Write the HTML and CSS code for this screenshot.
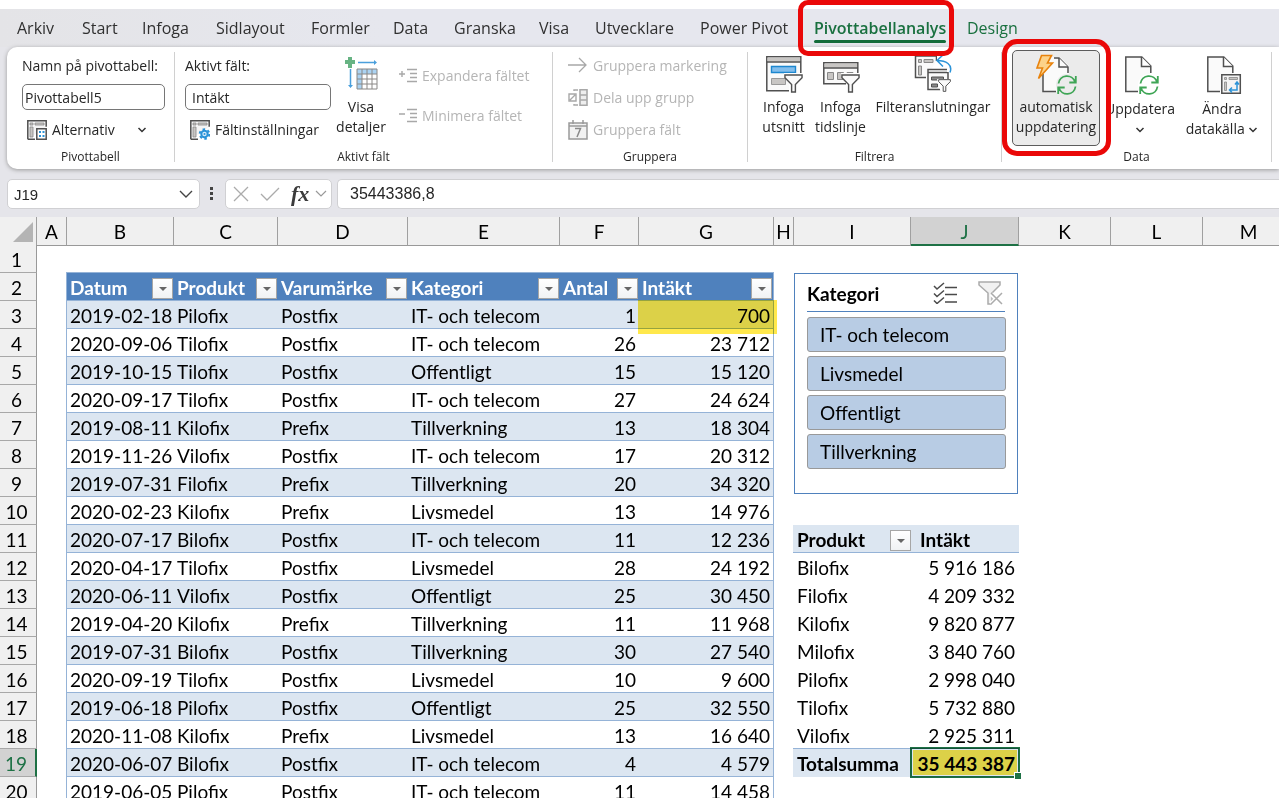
FILE: index.html
```html
<!DOCTYPE html>
<html lang="sv">
<head>
<meta charset="utf-8">
<meta name="viewport" content="width=device-width, initial-scale=1">
<title>Pivottabell</title>
<link rel="stylesheet" href="styles.css">
</head>
<body>
<svg class="defs" aria-hidden="true">
  <symbol id="chev" viewBox="0 0 10 8"><path d="M1.500 2l3.500 3.500L8.500 2" fill="none" stroke="currentColor" stroke-width="1.500"/></symbol>
  <symbol id="refresh" viewBox="0 0 20 20"><path d="M1.500 8.500A8.500 8.500 0 0 1 18 7M18.500 11.500A8.500 8.500 0 0 1 2 13M18.800 1v6.500h-6.500M1.200 19v-6.500h6.500" fill="none" stroke="#3fa556" stroke-width="1.800"/></symbol>
  <symbol id="funnel" viewBox="0 0 20 20"><path d="M1 1h18v3l-7 7v8H8v-8L1 4z" fill="#fafafa" stroke="#505050" stroke-width="1.500"/></symbol>
</svg>

<nav class="tabs">
  <a href="#">Arkiv</a><a href="#">Start</a><a href="#">Infoga</a><a href="#">Sidlayout</a><a href="#">Formler</a><a href="#">Data</a><a href="#">Granska</a><a href="#">Visa</a><a href="#">Utvecklare</a><a href="#">Power Pivot</a><a href="#" class="active">Pivottabellanalys</a><a href="#" class="context">Design</a>
</nav>

<div class="ribbon-area">
<div class="ribbon">
  <section class="group g-name">
    <div class="items stack">
      <label for="pname">Namn på pivottabell:</label>
      <input id="pname" type="text" value="Pivottabell5">
      <button class="small"><svg width="20" height="20" viewBox="0 0 20 20"><path d="M.8 19.200V.8h18.400v6M.8 19.200H8" fill="#f4f4f4" stroke="#505050" stroke-width="1.500"/><path d="M3 3h3v2H3zM8 3h9v2H8zM3 7h3v10H3z" fill="#c8c6c4" stroke="#888" stroke-width=".8"/><path d="M9.800 8.800h9.400v10.400H9.800z" fill="#fff" stroke="#505050" stroke-width="1.500"/><path d="M12 11h2v2h-2zM15.500 11h2v2h-2zM12 15h2v2h-2zM15.500 15h2v2h-2z" fill="#2b93d8"/></svg>Alternativ<svg class="chev push" width="10" height="8"><use href="#chev"/></svg></button>
    </div>
    <h2>Pivottabell</h2>
  </section>
  <section class="group g-field">
    <div class="items">
      <div class="stack">
        <label for="fname">Aktivt fält:</label>
        <input id="fname" class="inset" type="text" value="Intäkt">
        <button class="small"><svg width="20" height="20" viewBox="0 0 20 20"><path d="M.8 19.200V.8h18.400v6M.8 19.200H8" fill="#f4f4f4" stroke="#505050" stroke-width="1.500"/><path d="M3 3h3v2H3zM8 3h9v2H8zM3 7h3v10H3z" fill="#c8c6c4" stroke="#888" stroke-width=".8"/><circle cx="14.500" cy="14" r="3.200" fill="#d5ebfa" stroke="#2b93d8" stroke-width="2"/><circle cx="14.500" cy="14" r="4.800" fill="none" stroke="#2b93d8" stroke-width="2" stroke-dasharray="2.500 2.530"/><circle cx="14.500" cy="14" r="1" fill="#2b93d8"/></svg>Fältinställningar</button>
      </div>
      <button class="large"><svg width="36" height="38" viewBox="0 0 36 38"><path d="M5 2h4v3h3v4H9v4H5V9H2V5h3z" fill="#67b383"/><path d="M15 7.500h17M7.500 14v16" stroke="#4a9fdc" stroke-width="1.500"/><path d="M31 5l3 2.500L31 10zM5 30l2.500 3L10 30z" fill="#4a9fdc"/><path d="M14 14h20v20H14z" fill="#fff"/><path d="M14 14h20v5H19v15h-5z" fill="#abd3f2"/><path d="M14 14h20v20H14zM14 19h20M14 24h20M14 29h20M19 14v20M24 14v20M29 14v20" fill="none" stroke="#8a8886" stroke-width="1"/></svg><span>Visa<br>detaljer</span></button>
      <div class="pair">
        <button class="small" disabled><svg width="20" height="16" viewBox="0 0 20 16"><path d="M1 6h6M4 3v6M9 1.500h10M12 5.500h7M12 9.500h7M9 13.500h10" stroke="#a8a8a8" stroke-width="1.400"/></svg>Expandera fältet</button>
        <button class="small" disabled><svg width="20" height="16" viewBox="0 0 20 16"><path d="M1 6h6M9 1.500h10M12 5.500h7M12 9.500h7M9 13.500h10" stroke="#a8a8a8" stroke-width="1.400"/></svg>Minimera fältet</button>
      </div>
    </div>
    <h2>Aktivt fält</h2>
  </section>
  <section class="group g-group">
    <div class="items stack">
      <button class="small" disabled><svg width="20" height="20" viewBox="0 0 20 20"><path d="M0 9h18M11 2l7 7-7 7" fill="none" stroke="#a8a8a8" stroke-width="1.300"/></svg>Gruppera markering</button>
      <button class="small" disabled><svg width="20" height="20" viewBox="0 0 20 20"><path d="M1 6h7v7H1zM2 12l5-5M6 3V2h4M6 16v1h4" fill="none" stroke="#a8a8a8" stroke-width="1.400"/><path d="M12 1.700h7v15.600h-7zM12 7h7M12 12h7" fill="#eee" stroke="#a8a8a8" stroke-width="1.600"/></svg>Dela upp grupp</button>
      <button class="small" disabled><svg width="20" height="20" viewBox="0 0 20 20"><path d="M1 3h18v16H1zM1 6h18M5 0v4M15 0v4" fill="#f2f2f2" stroke="#9a9a9a" stroke-width="1.500"/><path d="M7 8.500h5.500L9 17" fill="none" stroke="#8a8a8a" stroke-width="1.500"/></svg>Gruppera fält</button>
    </div>
    <h2>Gruppera</h2>
  </section>
  <section class="group g-filter">
    <div class="items">
      <button class="large"><svg width="38" height="38" viewBox="0 0 38 38"><path d="M1.800 1.800h34v34h-34z" fill="#fafafa" stroke="#505050" stroke-width="1.500"/><path d="M2.500 2.500h32.600v4H2.500z" fill="#c8c6c4"/><path d="M2 7h34" stroke="#505050" stroke-width="1.300"/><path d="M6.500 11.500h24v6h-24z" fill="#83beec" stroke="#1c87cf" stroke-width="1.400"/><path d="M6.500 23.500h14v6h-14z" fill="#c8c6c4" stroke="#999"/><path d="M19 18h19v20H24V25l-5-4z" fill="#fff"/><use href="#funnel" x="19" y="19" width="19" height="19"/></svg><span>Infoga<br>utsnitt</span></button>
      <button class="large"><svg width="38" height="38" viewBox="0 0 38 38"><path d="M1.800 7.800h34v21h-34z" fill="#fafafa" stroke="#505050" stroke-width="1.500"/><path d="M2.500 8.500h32.600v4H2.500z" fill="#c8c6c4"/><path d="M2 13h34" stroke="#505050" stroke-width="1.300"/><path d="M5.500 17.500h6v7h-6zM15.500 17.500h6v7h-6zM25 17.500h6v4h-6z" fill="#c8c6c4" stroke="#888"/><path d="M19 18h19v20H24V25l-5-4z" fill="#fff"/><use href="#funnel" x="19" y="19" width="19" height="19"/></svg><span>Infoga<br>tidslinje</span></button>
      <button class="large"><svg width="38" height="38" viewBox="0 0 38 38"><path d="M12 22.500H1.500V1h21v5" fill="#fafafa" stroke="#505050" stroke-width="1.500"/><path d="M4.500 4.500h3v3h-3zM10 4.500h9v3h-9zM4.500 11h3v9h-3z" fill="#c8c6c4" stroke="#888"/><path d="M14 14.500h20v20H14z" fill="#fafafa" stroke="#505050" stroke-width="1.500"/><path d="M14 17.500h20" stroke="#505050" stroke-width="1.500"/><path d="M17.500 22h12v3h-12zM17.500 29h6v3h-6z" fill="#888" stroke="#505050"/><path d="M23 24h14v14H27z" fill="#fff"/><path d="M23 12V0h14v17h-4v-4z" fill="#fff"/><use href="#funnel" x="24" y="24" width="13" height="13"/><path d="M36 17.500c3-8-4-12-13-12M29 0l-6 5.500 6 6" fill="none" stroke="#2b93d8" stroke-width="1.500"/></svg><span>Filteranslutningar</span></button>
    </div>
    <h2>Filtrera</h2>
  </section>
  <section class="group g-data">
    <div class="items">
      <button class="large pressed" aria-pressed="true"><svg width="42" height="42" viewBox="0 0 42 42"><path d="M8 3h17l9 9v26H8z" fill="#fafafa"/><path d="M8 20v17.500h13M19 4h5l9 9v6" fill="none" stroke="#505050" stroke-width="1.500"/><path d="M24 4v9h9" fill="#fafafa" stroke="#505050" stroke-width="1.500"/><path d="M6.500 1.500h10l-4 7.500h5L3.500 24.500l4-10.500H2z" fill="#fcd28a" stroke="#e8820c" stroke-width="1.600"/><circle cx="32" cy="31" r="11" fill="#ebebeb"/><use href="#refresh" x="22" y="21" width="20" height="20"/></svg><span>automatisk<br>uppdatering</span></button>
      <button class="large low"><svg width="40" height="40" viewBox="-4 0 40 40"><path d="M14 36.500H1.800V2h16l9 9v7" fill="#fafafa" stroke="#505050" stroke-width="1.500"/><path d="M17.500 2v9.500H27" fill="#fff" stroke="#505050" stroke-width="1.500"/><circle cx="25" cy="30" r="11" fill="#fff"/><use href="#refresh" x="15" y="20" width="20" height="20"/></svg><span>Uppdatera<br><svg class="chev" width="10" height="8"><use href="#chev"/></svg></span></button>
      <button class="large low"><svg width="40" height="40" viewBox="-4 0 40 40"><path d="M14 36.500H1.800V2h16l9 9v7" fill="#fafafa" stroke="#505050" stroke-width="1.500"/><path d="M17.500 2v9.500H27" fill="#fff" stroke="#505050" stroke-width="1.500"/><path d="M15.800 19.800h18.500v18.500H15.800z" fill="#f4f4f4" stroke="#505050" stroke-width="1.500"/><path d="M18.500 22.500h2v2h-2zM23 22.500h8.500v2H23zM18.500 27h2v8.500h-2z" fill="#c8c6c4" stroke="#888" stroke-width=".8"/><path d="M31 28v7h-7M29 29.500l2-2.500 2 2.500M26 32.500L23.500 35l2.500 2.500" fill="none" stroke="#2b93d8" stroke-width="1.500"/></svg><span>Ändra<br>datakälla <svg class="chev" width="10" height="8"><use href="#chev"/></svg></span></button>
    </div>
    <h2>Data</h2>
  </section>
</div>
</div>

<div class="formula-bar">
  <div class="box name-box"><input type="text" aria-label="Namnruta" value="J19"><svg width="14" height="10" viewBox="0 0 14 10"><path d="M1 2l6 6 6-6" fill="none" stroke="#444" stroke-width="1.400"/></svg></div>
  <svg class="dots" width="4" height="14"><path d="M0 0h3v3H0zM0 5h3v3H0zM0 10h3v3H0z" fill="#444"/></svg>
  <div class="box fx-box">
    <button aria-label="Avbryt"><svg width="16" height="16" viewBox="0 0 16 16"><path d="M1 1l14 14M15 1L1 15" stroke="#ababab" stroke-width="1.300"/></svg></button>
    <button aria-label="Ange"><svg width="20" height="16" viewBox="0 0 20 16"><path d="M1 8l6 6L19 2" fill="none" stroke="#ababab" stroke-width="1.300"/></svg></button>
    <button class="fx" aria-label="Infoga funktion">fx</button>
    <svg width="12" height="8" viewBox="0 0 12 8"><path d="M1 1l5 5 5-5" fill="none" stroke="#999" stroke-width="1.200"/></svg>
  </div>
  <input class="box formula" type="text" aria-label="Formelfält" value="35443386,8">
</div>

<main class="sheet">
  <div class="col-heads">
    <span class="corner"><svg width="20" height="20"><path d="M20 0v20H0z" fill="#b4b4b4"/></svg></span>
    <span>A</span><span>B</span><span>C</span><span>D</span><span>E</span><span>F</span><span>G</span><span>H</span><span>I</span><span class="sel">J</span><span>K</span><span>L</span><span>M</span>
  </div>
  <div class="cells">
    <div class="row-heads">
      <span>1</span><span>2</span><span>3</span><span>4</span><span>5</span><span>6</span><span>7</span><span>8</span><span>9</span><span>10</span><span>11</span><span>12</span><span>13</span><span>14</span><span>15</span><span>16</span><span>17</span><span>18</span><span class="sel">19</span><span>20</span>
    </div>
    <table class="data">
      <colgroup><col class="c-b"><col class="c-c"><col class="c-d"><col class="c-e"><col class="c-f"><col class="c-g"></colgroup>
      <thead>
        <tr>
          <th><div>Datum<button class="drop" aria-label="Filtrera Datum"></button></div></th>
          <th><div>Produkt<button class="drop" aria-label="Filtrera Produkt"></button></div></th>
          <th><div>Varumärke<button class="drop" aria-label="Filtrera Varumärke"></button></div></th>
          <th><div>Kategori<button class="drop" aria-label="Filtrera Kategori"></button></div></th>
          <th><div>Antal<button class="drop" aria-label="Filtrera Antal"></button></div></th>
          <th><div>Intäkt<button class="drop" aria-label="Filtrera Intäkt"></button></div></th>
        </tr>
      </thead>
      <tbody>
        <tr><td>2019-02-18</td><td>Pilofix</td><td>Postfix</td><td>IT- och telecom</td><td>1</td><td class="marked">700</td></tr>
        <tr><td>2020-09-06</td><td>Tilofix</td><td>Postfix</td><td>IT- och telecom</td><td>26</td><td>23 712</td></tr>
        <tr><td>2019-10-15</td><td>Tilofix</td><td>Postfix</td><td>Offentligt</td><td>15</td><td>15 120</td></tr>
        <tr><td>2020-09-17</td><td>Tilofix</td><td>Postfix</td><td>IT- och telecom</td><td>27</td><td>24 624</td></tr>
        <tr><td>2019-08-11</td><td>Kilofix</td><td>Prefix</td><td>Tillverkning</td><td>13</td><td>18 304</td></tr>
        <tr><td>2019-11-26</td><td>Vilofix</td><td>Postfix</td><td>IT- och telecom</td><td>17</td><td>20 312</td></tr>
        <tr><td>2019-07-31</td><td>Filofix</td><td>Prefix</td><td>Tillverkning</td><td>20</td><td>34 320</td></tr>
        <tr><td>2020-02-23</td><td>Kilofix</td><td>Prefix</td><td>Livsmedel</td><td>13</td><td>14 976</td></tr>
        <tr><td>2020-07-17</td><td>Bilofix</td><td>Postfix</td><td>IT- och telecom</td><td>11</td><td>12 236</td></tr>
        <tr><td>2020-04-17</td><td>Tilofix</td><td>Postfix</td><td>Livsmedel</td><td>28</td><td>24 192</td></tr>
        <tr><td>2020-06-11</td><td>Vilofix</td><td>Postfix</td><td>Offentligt</td><td>25</td><td>30 450</td></tr>
        <tr><td>2019-04-20</td><td>Kilofix</td><td>Prefix</td><td>Tillverkning</td><td>11</td><td>11 968</td></tr>
        <tr><td>2019-07-31</td><td>Bilofix</td><td>Postfix</td><td>Tillverkning</td><td>30</td><td>27 540</td></tr>
        <tr><td>2020-09-19</td><td>Tilofix</td><td>Postfix</td><td>Livsmedel</td><td>10</td><td>9 600</td></tr>
        <tr><td>2019-06-18</td><td>Pilofix</td><td>Postfix</td><td>Offentligt</td><td>25</td><td>32 550</td></tr>
        <tr><td>2020-11-08</td><td>Kilofix</td><td>Prefix</td><td>Livsmedel</td><td>13</td><td>16 640</td></tr>
        <tr><td>2020-06-07</td><td>Bilofix</td><td>Postfix</td><td>IT- och telecom</td><td>4</td><td>4 579</td></tr>
        <tr><td>2019-06-05</td><td>Pilofix</td><td>Postfix</td><td>IT- och telecom</td><td>11</td><td>14 458</td></tr>
      </tbody>
    </table>
    <div class="side">
      <section class="slicer">
        <header><h3>Kategori</h3>
          <button aria-label="Flerval"><svg width="24" height="22" viewBox="0 0 24 22"><path d="M1 4l3 3 7-6M1 11.500l3 3 7-6M1 18.500l3 3 7-6M12 5.500h12M12 12.500h12M12 20h12" fill="none" stroke="#4a4a4a" stroke-width="1.500"/></svg></button>
          <button aria-label="Rensa filter"><svg width="26" height="24" viewBox="0 0 26 24"><path d="M1 1h21v3l-8 8v11h-4V12L1 4z" fill="#f1f1f1" stroke="#ababab" stroke-width="1.500"/><path d="M13 13l11 10M24 12L13 23" stroke="#fff" stroke-width="4"/><path d="M13 12l11 11M24 12L13 23" stroke="#ababab" stroke-width="1.500"/></svg></button>
        </header>
        <button class="pick">IT- och telecom</button>
        <button class="pick">Livsmedel</button>
        <button class="pick">Offentligt</button>
        <button class="pick">Tillverkning</button>
      </section>
      <table class="pivot">
        <thead><tr><th><div>Produkt<button class="drop" aria-label="Filtrera Produkt"></button></div></th><th>Intäkt</th></tr></thead>
        <tbody>
          <tr><td>Bilofix</td><td>5 916 186</td></tr>
          <tr><td>Filofix</td><td>4 209 332</td></tr>
          <tr><td>Kilofix</td><td>9 820 877</td></tr>
          <tr><td>Milofix</td><td>3 840 760</td></tr>
          <tr><td>Pilofix</td><td>2 998 040</td></tr>
          <tr><td>Tilofix</td><td>5 732 880</td></tr>
          <tr><td>Vilofix</td><td>2 925 311</td></tr>
        </tbody>
        <tfoot><tr><th>Totalsumma</th><td class="current">35 443 387</td></tr></tfoot>
      </table>
    </div>
  </div>
</main>
</body>
</html>
```
FILE: styles.css
```css
* { box-sizing: border-box; }
body {
  margin: 0;
  height: 100vh;
  overflow: hidden;
  display: flex;
  flex-direction: column;
  padding-top: 9px;
  background: #fff;
  color: #262626;
  font: 14px/20px "Open Sans", "Noto Sans", sans-serif;
}
button, input { font: inherit; color: inherit; margin: 0; }
button { border: 0; background: none; padding: 0; }
h2, h3 { margin: 0; }
svg { flex: none; }
.defs { display: none; }

/* Tabs */
.tabs {
  flex: none;
  display: grid;
  grid-template-columns: 65px 60px 74px 95px 82px 61px 85px 56px 105px 114px 153px auto;
  height: 38px;
  padding-left: 17px;
  background: linear-gradient(90deg, #e4e4e7, #e6e7ee 30%);
  font-size: 16px;
  line-height: 38px;
  white-space: nowrap;
}
.tabs a { justify-self: start; color: #303030; text-decoration: none; }
.tabs .context { color: #19703f; }
.tabs .active { position: relative; color: #19703f; font-weight: 600; }
.tabs .active::before {
  content: "";
  position: absolute;
  left: 0; right: 0; bottom: 4px;
  height: 3px;
  border-radius: 2px;
  background: #136c3b;
}
.tabs .active::after {
  content: "";
  position: absolute;
  inset: -9px -8px -9px -16px;
  border: 5px solid #ea0808;
  border-radius: 10px;
  z-index: 2;
}

/* Ribbon */
.ribbon-area {
  flex: none;
  padding-left: 7px;
  background: #e5e5ea;
}
.ribbon {
  position: relative;
  display: flex;
  height: 122px;
  border-radius: 10px 0 0 10px;
  background: #fff;
  box-shadow: 0 1px 4px #999;
  white-space: nowrap;
}
.group {
  flex: none;
  margin: 5px 0 7px;
  border-right: 1px solid #d0d0d0;
}
.group h2 { font-size: 12px; line-height: 16px; font-weight: 400; text-align: center; }
.items { height: 97px; display: flex; }
.g-name { width: 168px; }
.g-name .items { padding-left: 15px; }
.g-field { width: 378px; }
.g-field .items { padding-left: 10px; }
.g-group { width: 195px; }
.g-group .items { padding-left: 15px; margin-top: -2px; height: 99px; }
.g-filter { width: 254px; }
.g-filter .items { padding-left: 7px; }
.g-data { width: 270px; }
.g-data .items { padding-left: 10px; gap: 2px; }
.stack { display: flex; flex-direction: column; }
.stack label { line-height: 28px; height: 32px; }
.stack input {
  width: 146px;
  height: 26px;
  padding: 0 2px;
  border: 1px solid #767676;
  border-radius: 5px;
  background: #fff;
}
.g-name .stack input { width: 143px; }
.stack .inset { padding-left: 6px; }
.small { display: flex; align-items: center; gap: 5px; height: 32px; }
.small:disabled { color: #b5b5b5; }
.g-name .small, .g-field .stack .small { padding-left: 5px; height: 39px; }
.g-name .small { width: 125px; }
.push { margin-left: auto; }
.chev { color: #333; }
.pair { display: flex; flex-direction: column; padding: 4px 0 0 7px; }
.pair .small { height: 40px; gap: 4px; }
.large {
  display: flex;
  flex-direction: column;
  align-items: center;
  gap: 4px;
  height: 97px;
  padding-top: 3px;
}
.g-field .large { width: 60px; }
.g-filter .large { width: 57px; }
.g-filter .large:last-child { width: 128px; }
.g-data .large.low { width: 76px; }
.g-data .large.low:last-child { width: 84px; }
.g-data .large.pressed {
  position: relative;
  width: 88px;
  height: 96px;
  margin-top: -2px;
  gap: 1px;
  border: 1px solid #5c5c5c;
  border-radius: 5px;
  background: #ebebeb;
}
.pressed::after {
  content: "";
  position: absolute;
  inset: -12px -12px -11px -11px;
  border: 5px solid #ea0808;
  border-radius: 15px;
}

/* Formula bar */
.formula-bar {
  flex: none;
  display: flex;
  align-items: center;
  height: 48px;
  padding: 2px 0 0 7px;
  background: #e5e5ea;
}
.box {
  height: 30px;
  display: flex;
  align-items: center;
  border: 1px solid #d0d0d3;
  border-radius: 5px;
  background: #fff;
}
.name-box { width: 193px; padding: 0 6px; }
.name-box input { flex: 1; min-width: 0; padding: 0; border: 0; font: 15px "Liberation Sans", Arial, sans-serif; }
.dots { margin: 0 11px 0 10px; }
.fx-box { width: 107px; padding: 0 2px 0 7px; gap: 11px; margin-right: 5px; }
.fx-box button { display: flex; }
.fx-box > svg { margin-left: -5px; }
.fx-box .fx { font: italic 700 22px/24px "Liberation Serif", serif; color: #3b3b3b; }
.formula {
  flex: 1;
  min-width: 0;
  padding: 0 12px;
  border-right: 0;
  border-radius: 5px 0 0 5px;
  font: 16px "Liberation Sans", Arial, sans-serif;
}

/* Sheet */
.sheet {
  flex: 1;
  min-height: 0;
  overflow: hidden;
  color: #000;
  font: 19px/25px Lato, Calibri, sans-serif;
}
.col-heads {
  display: grid;
  grid-template-columns: 37px 30px 107px 104px 130px 152px 79px 135px 20px 117px 108px 92px 92px 92px;
  height: 28px;
}
.col-heads span {
  padding-top: 2px;
  background: #f0f0f0;
  border-right: 1px solid #a0a0a0;
  border-bottom: 1px solid #999;
  text-align: center;
}
.col-heads .corner { padding: 5px 3px 0 0; text-align: right; line-height: 0; }
.col-heads .sel { background: #d2d2d2; color: #1e7145; border-bottom: 2px solid #1e7145; }
.cells { display: flex; align-items: flex-start; }
.row-heads { flex: none; width: 37px; margin-right: 29px; }
.row-heads span {
  display: block;
  height: 28px;
  padding: 2px 3px 0 0;
  background: #f0f0f0;
  border-right: 1px solid #999;
  border-bottom: 1px solid #a8a8a8;
  text-align: center;
}
.row-heads .sel { background: #d2d2d2; color: #1e7145; border-right: 2px solid #1e7145; }

table { border-collapse: separate; border-spacing: 0; table-layout: fixed; }
th, td { height: 28px; padding: 2px 3px 0; text-align: left; vertical-align: top; white-space: nowrap; }
th div { display: flex; height: 25px; justify-content: space-between; }
.drop {
  width: 21px;
  height: 21px;
  margin: 3px -2px 0 0;
  border: 1px solid #a6a6a6;
  background: linear-gradient(#fff, #f0f2f4);
  display: flex;
  align-items: center;
  justify-content: center;
}
.drop::before { content: ""; border: 4px solid transparent; border-top-color: #666; border-bottom: 0; }

.data {
  flex: none;
  width: 708px;
  margin: 27px 19px 0 0;
  border-top: 1px solid #95b3d7;
  border-left: 1px solid #95b3d7;
}
.c-b { width: 107px; }
.c-c { width: 104px; }
.c-d { width: 130px; }
.c-e { width: 152px; }
.c-f { width: 79px; }
.c-g { width: 135px; }
.data th { background: #4f81bd; color: #fff; border-bottom: 1px solid #95b3d7; }
.data td { border-bottom: 1px solid #95b3d7; }
.data tr > :last-child { border-right: 1px solid #95b3d7; }
.data tbody tr:nth-child(odd) { background: #dce6f1; }
.data td:nth-child(n+5) { text-align: right; }
.marked { position: relative; }
.marked::after {
  content: "";
  position: absolute;
  inset: -1px -4px -6px -1px;
  background: #ffe84c;
  mix-blend-mode: multiply;
}

.side { flex: none; width: 226px; margin-top: 28px; }
.slicer {
  width: 224px;
  height: 221px;
  margin: 0 0 31px 1px;
  padding: 1px 11px 0 12px;
  border: 1px solid #4f81bd;
  background: #fff;
}
.slicer header {
  display: flex;
  align-items: center;
  gap: 21px;
  height: 37px;
  margin: 0 1px 5px 0;
  padding-right: 1px;
  border-bottom: 1px solid #4f81bd;
}
.slicer header button { display: flex; }
.slicer h3 { flex: 1; font-size: 19px; }
.pick {
  display: block;
  width: 100%;
  height: 35px;
  margin-bottom: 4px;
  padding-left: 12px;
  border: 1px solid #999;
  border-radius: 3px;
  background: #b8cce4;
  text-align: left;
}
.pivot { width: 226px; }
.pivot th, .pivot td { padding: 2px 4px 0; }
.pivot th:first-child { width: 118px; }
.pivot .drop { margin-right: -4px; }
.pivot thead th { background: #dce6f1; border-bottom: 1px solid #95b3d7; }
.pivot thead th:last-child { padding-left: 9px; }
.pivot td { text-align: right; }
.pivot td:first-child { text-align: left; }
.pivot tbody tr:last-child td { border-bottom: 1px solid #95b3d7; }
.pivot tfoot th { background: #dce6f1; }
.pivot .current { position: relative; font-weight: 700; background: #dce6f1; }
.current::before {
  content: "";
  position: absolute;
  inset: -2px -1px -1px -1px;
  border: 2px solid #1e7145;
  background: #ffe84c;
  background-clip: content-box;
  padding: 1px;
  mix-blend-mode: multiply;
}
.current::after {
  content: "";
  position: absolute;
  right: -2px; bottom: -2px;
  width: 6px;
  height: 6px;
  border: 1px solid #fff;
  border-width: 1px 0 0 1px;
  background: #1e7145;
}
```
